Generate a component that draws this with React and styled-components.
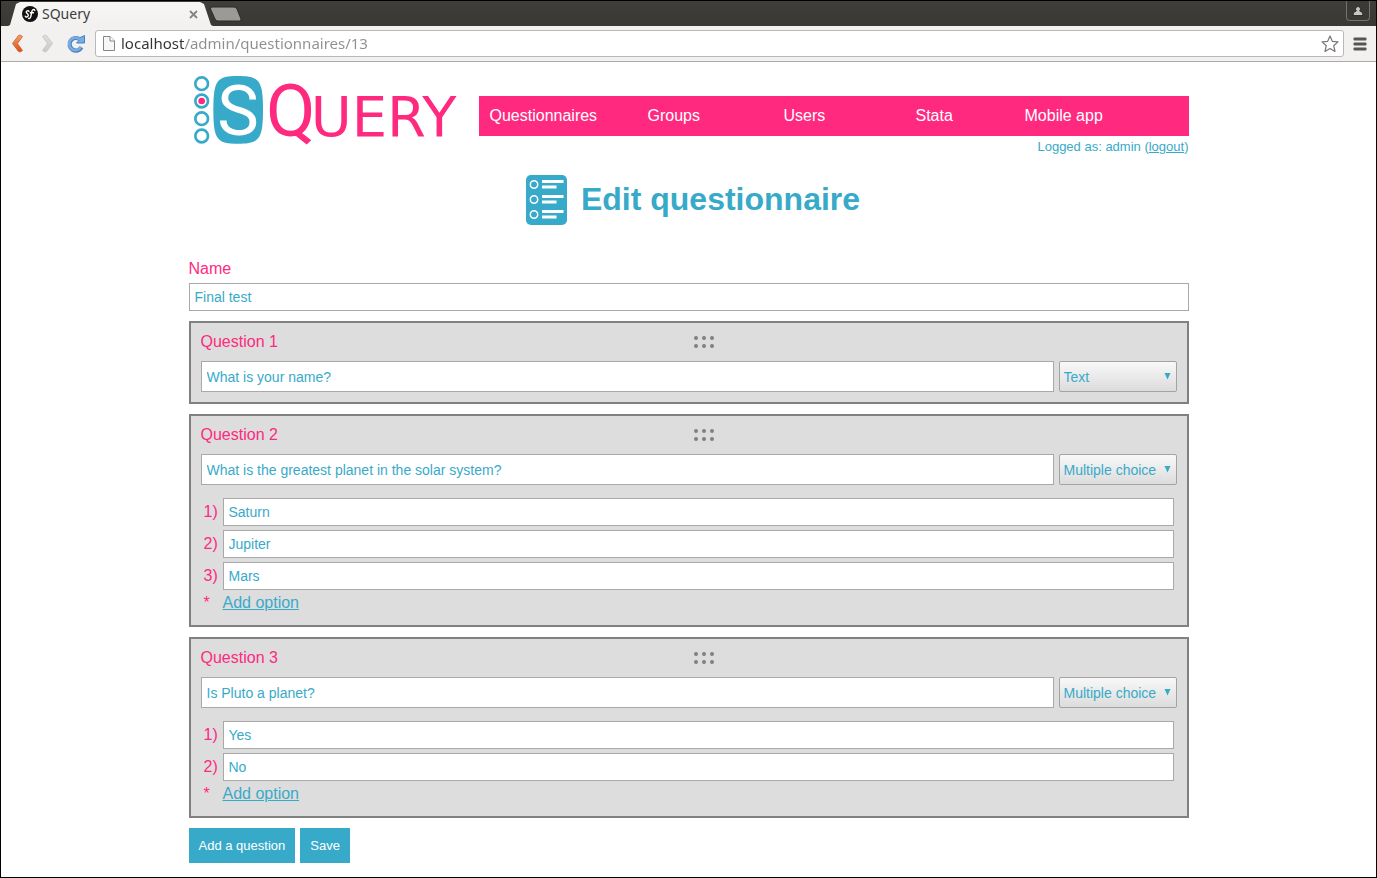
import React from 'react';
import styled, { createGlobalStyle } from 'styled-components';

const PINK = '#ff2a7f';
const BLUE = '#38aac9';
const UI_FONT = '"Noto Sans", "Open Sans", sans-serif';

const GlobalStyle = createGlobalStyle`
  *, *::before, *::after { box-sizing: border-box; }
  body {
    margin: 0;
    background: #fff;
    font: 16px/18px "Liberation Sans", Arial, sans-serif;
    color: ${PINK};
  }
  input, select, button { font-family: inherit; margin: 0; }
`;

const Window = styled.div`
  min-height: 100vh;
  border: 1px solid #000;
  background: #fff;
`;

/* ---------- browser frame ---------- */

const TabStrip = styled.div`
  display: flex;
  height: 25px;
  padding: 0 6px 0 7px;
  background: linear-gradient(#3f3e3a, #393834);
`;

const Tab = styled.div`
  display: flex;
  align-items: center;
  gap: 4px;
  width: 205px;
  margin-top: 1px;
  padding: 0 14px;
  background: linear-gradient(#f7f6f5, #f2f1f0);
  clip-path: polygon(0 100%, 2px 96%, 8px 8%, 12px 0, 192px 0, 196px 8%, 203px 96%, 100% 100%);
  font: 14px/20px ${UI_FONT};
  color: #3c3c3c;
`;

const TabTitle = styled.span`
  flex: 1;
`;

const IconButton = styled.button`
  display: flex;
  align-items: center;
  justify-content: center;
  flex: none;
  width: ${(p) => p.$width}px;
  height: ${(p) => p.$height || 24}px;
  padding: 0;
  border: 0;
  background: none;
`;

const NewTab = styled(IconButton)`
  margin: 5px auto 0 -4px;
`;

const Profile = styled(IconButton)`
  border: 1px solid #75736d;
  border-top: 0;
  border-radius: 0 0 4px 4px;
  background: #3a3935;
`;

const Toolbar = styled.div`
  display: flex;
  align-items: center;
  height: 36px;
  padding: 0 5px 0 6px;
  border-bottom: 1px solid #acabaa;
  background: #f2f1f0;
`;

const NavButtons = styled.div`
  display: flex;
  gap: 7px;
  margin-right: 8px;
`;

const AddressBar = styled.div`
  display: flex;
  align-items: center;
  flex: 1;
  height: 27px;
  margin-right: 5px;
  padding: 0 4px 0 6px;
  border: 1px solid #bab9b8;
  border-radius: 3px;
  background: #fff;
`;

const AddressInput = styled.input`
  flex: 1;
  min-width: 0;
  height: 24px;
  padding: 0 0 2px 5px;
  border: 0;
  outline: 0;
  font-family: ${UI_FONT};
  font-size: 15px;
  color: transparent;
  background: linear-gradient(90deg, #333 68px, #8f8f8f 68px);
  background-clip: text;
  -webkit-background-clip: text;
`;

/* ---------- page ---------- */

const Page = styled.div`
  max-width: 1000px;
  margin: 0 auto;
  padding: 8px 0 14px;
`;

const Header = styled.header`
  display: flex;
  gap: 10px;
`;

const HeaderSide = styled.div`
  flex: 1;
  padding-top: 26px;
`;

const Menu = styled.nav`
  display: grid;
  grid-template-columns: 158fr 136fr 132fr 109fr 175fr;
  background: ${PINK};
`;

const MenuLink = styled.a`
  padding: 0 11px;
  line-height: 40px;
  color: #fff;
  text-decoration: none;
`;

const Login = styled.p`
  margin: 2px 0 0;
  font-size: 13px;
  text-align: right;
  color: ${BLUE};
`;

const TextLink = styled.a`
  color: ${BLUE};
  text-decoration: underline;
`;

const Title = styled.h1`
  display: flex;
  align-items: center;
  justify-content: center;
  gap: 8px;
  margin: 14px 0 30px;
  font-size: 32px;
  line-height: 40px;
  color: ${BLUE};
`;

const TitleText = styled.span`
  padding-bottom: 2px;
`;

const Form = styled.form`
  display: flex;
  flex-direction: column;
  gap: 10px;
`;

const Field = styled.div`
  display: flex;
  flex-direction: column;
  gap: 5px;
`;

const TextInput = styled.input`
  flex: 1 0 auto;
  min-width: 0;
  height: ${(p) => (p.$tall ? 31 : 28)}px;
  padding: 0 5px;
  border: 1px solid #a9a9a9;
  background: #fff;
  font-size: 14px;
  color: ${BLUE};
`;

const Panel = styled.section`
  padding: 10px;
  border: 2px solid #808080;
  background: #ddd;
`;

const PanelHead = styled.div`
  display: grid;
  grid-template-columns: 493fr auto 462fr;
  align-items: center;
  margin-bottom: 10px;
`;

const QuestionRow = styled.div`
  display: flex;
  gap: 5px;
`;

const SelectBox = styled.div`
  position: relative;
  flex: none;
  width: 118px;
`;

const Select = styled.select`
  appearance: none;
  display: block;
  width: 100%;
  height: 31px;
  padding: 0 4px;
  border: 1px solid #a3a3a3;
  border-radius: 2px;
  background: linear-gradient(#f8f8f8, #dcdcdc);
  font-size: 14px;
  color: ${BLUE};
`;

const SelectArrow = styled.svg`
  position: absolute;
  top: 12px;
  right: 6px;
  pointer-events: none;
`;

const Options = styled.div`
  display: flex;
  flex-direction: column;
  gap: 4px;
  padding: 13px 3px 3px;
`;

const OptionRow = styled.div`
  display: flex;
  align-items: center;
`;

const OptionMark = styled.label`
  width: 19px;
`;

const Actions = styled.div`
  display: flex;
  gap: 5px;
`;

const ActionButton = styled.button`
  height: 35px;
  padding: 0 10px;
  border: 0;
  background: ${BLUE};
  color: #fff;
  font-size: 13px;
`;

/* ---------- drawings ---------- */

const Logo = () => (
  <svg width="280" height="80" viewBox="12 12 840 240" overflow="visible" role="img" aria-label="SQuery">
    {[53, 105, 158, 210].map((y) => (
      <circle key={y} cx="50" cy={y} r="19" fill="none" stroke={BLUE} strokeWidth="8" />
    ))}
    <circle cx="50" cy="105" r="10" fill={PINK} />
    <path
      d="M159 30C222 30 234 42 234 131S222 233 159 233 85 221 85 131 97 30 159 30Z"
      fill={BLUE}
    />
    <text x="159" y="208" textAnchor="middle" fontFamily="Roboto, sans-serif" fontSize="210" fill="#fff">
      S
    </text>
    <text x="243" y="209" fontFamily="Roboto, sans-serif" fontSize="216" fill={PINK}>
      Q
    </text>
    <text x="377" y="210" fontFamily="DejaVu Sans, sans-serif" fontSize="168" fill={PINK}>
      UERY
    </text>
  </svg>
);

const ListIcon = () => (
  <svg width="56" height="60" viewBox="0 0 56 60" aria-hidden="true">
    <rect x="9" y="5" width="41" height="50" rx="5" fill={BLUE} />
    {[14, 29, 44].map((y) => (
      <g key={y}>
        <circle cx="17" cy={y + 0.5} r="3.7" fill="none" stroke="#fff" strokeWidth="1.5" />
        <path d={`M25 ${y - 2.5}h21.5M25 ${y + 3}h14.5`} stroke="#fff" strokeWidth="2.8" />
      </g>
    ))}
  </svg>
);

const DragHandle = () => (
  <svg width="22" height="12" viewBox="0 0 22 12" aria-hidden="true">
    {[3, 11, 19].map((x) =>
      [2, 10].map((y) => <circle key={`${x}-${y}`} cx={x} cy={y} r="2" fill="#808080" />)
    )}
  </svg>
);

const Favicon = () => (
  <svg width="16" height="16" viewBox="0 0 16 16" aria-hidden="true">
    <circle cx="8" cy="8" r="8" fill="#111" />
    <path
      d="M7 5.3C6.3 4.300 4 4.700 4.200 6.200 4.400 7.500 6.600 7.600 6.300 9.500 6 11.200 3.800 11.400 3.300 10.200M12.800 4.400C11.800 2.600 10.200 3.700 9.800 5.700L8.800 10.500C8.500 12.200 7.300 13 6.600 12.200M8.300 6.800H11.500"
      fill="none"
      stroke="#fff"
      strokeWidth="1.400"
      strokeLinecap="round"
    />
  </svg>
);

const Chevron = ({ flip, from, to, edge }) => {
  const id = flip ? 'chevron-next' : 'chevron-prev';
  return (
    <svg width="14" height="20" viewBox="0 0 14 20" aria-hidden="true">
      <defs>
        <linearGradient id={id} x1="0" y1="0" x2="0" y2="1">
          <stop offset="0" stopColor={from} />
          <stop offset="1" stopColor={to} />
        </linearGradient>
      </defs>
      <path
        transform={flip ? 'matrix(-1 0 0 1 14 0)' : undefined}
        d="M9 1 11.500 2.500 6.500 9.500 11.500 16.500 9 18 7.500 17.500 1.500 9.500 7.500 1.500Z"
        fill={`url(#${id})`}
        stroke={edge}
        strokeWidth="0.800"
        strokeLinejoin="round"
      />
    </svg>
  );
};

const ReloadIcon = () => (
  <svg width="20" height="20" viewBox="0 0 20 20" aria-hidden="true">
    <path d="M15.500 13.200A6.300 6.300 0 1 1 14 5.500" fill="none" stroke="#4a80bd" strokeWidth="4.200" />
    <path d="M18.500 1.500V9H10.500L13 6.500 12 4.500Z" fill="#79ace2" stroke="#4a80bd" strokeLinejoin="round" />
    <path d="M15 12.900A6.300 6.300 0 1 1 14 5.500" fill="none" stroke="#79ace2" strokeWidth="2.600" />
  </svg>
);

const PageIcon = () => (
  <svg width="14" height="17" viewBox="0 0 14 17" aria-hidden="true">
    <path d="M1.500 1.500H8L12.500 6V15.500H1.500Z" fill="#f7f7f7" stroke="#858585" />
    <path d="M8 1.500V6H12.500" fill="#fff" stroke="#858585" />
  </svg>
);

const StarIcon = () => (
  <svg width="18" height="18" viewBox="0 0 18 18" aria-hidden="true">
    <path
      d="M9 1 11.300 6.300 17 6.900 12.700 10.700 14 16.500 9 13.500 4 16.500 5.300 10.700 1 6.900 6.700 6.300Z"
      fill="#fff"
      stroke="#777"
      strokeWidth="1.200"
      strokeLinejoin="round"
    />
  </svg>
);

const MenuIcon = () => (
  <svg width="14" height="14" viewBox="0 0 14 14" aria-hidden="true">
    {[1, 6, 11].map((y) => (
      <rect key={y} x="0.500" y={y - 0.500} width="13" height="3" rx="1" fill="#555" />
    ))}
  </svg>
);

const ProfileIcon = () => (
  <svg width="12" height="12" viewBox="0 0 12 12" aria-hidden="true">
    <path
      d="M6 1.500A2.600 2.600 0 0 1 7.600 6Q11 6.400 11 10.500H1Q1 6.400 4.400 6A2.600 2.600 0 0 1 6 1.500Z"
      fill="#c9c7c1"
      stroke="#1e1d1b"
      strokeWidth="0.800"
    />
  </svg>
);

/* ---------- data ---------- */

const MENU = ['Questionnaires', 'Groups', 'Users', 'Stata', 'Mobile app'];

const QUESTIONS = [
  { text: 'What is your name?', type: 'Text', options: [] },
  {
    text: 'What is the greatest planet in the solar system?',
    type: 'Multiple choice',
    options: ['Saturn', 'Jupiter', 'Mars'],
  },
  { text: 'Is Pluto a planet?', type: 'Multiple choice', options: ['Yes', 'No'] },
];

function BrowserFrame() {
  return (
    <>
      <TabStrip>
        <Tab>
          <Favicon />
          <TabTitle>SQuery</TabTitle>
          <IconButton $width={12} aria-label="Close tab">
            <svg width="9" height="9" viewBox="0 0 9 9" aria-hidden="true">
              <path d="M1 1 8 8M8 1 1 8" stroke="#858483" strokeWidth="1.800" />
            </svg>
          </IconButton>
        </Tab>
        <NewTab $width={33} $height={16} aria-label="New tab">
          <svg width="33" height="16" viewBox="0 0 33 16" aria-hidden="true">
            <path
              d="M3 1H25Q27 1 28 3L32 13Q32.500 15 30.500 15H9Q7 15 6 13L1.500 3Q1 1 3 1Z"
              fill="#9b9a97"
              stroke="#2b2a27"
            />
          </svg>
        </NewTab>
        <Profile $width={24} $height={20} aria-label="Profile">
          <ProfileIcon />
        </Profile>
      </TabStrip>
      <Toolbar>
        <NavButtons>
          <IconButton $width={22} aria-label="Back">
            <Chevron from="#f5a56b" to="#dc4a12" edge="#cc5a2a" />
          </IconButton>
          <IconButton $width={22} aria-label="Forward">
            <Chevron flip from="#dededd" to="#cbcac9" edge="#c2c1c0" />
          </IconButton>
          <IconButton $width={22} aria-label="Reload">
            <ReloadIcon />
          </IconButton>
        </NavButtons>
        <AddressBar>
          <PageIcon />
          <AddressInput aria-label="Address" defaultValue="localhost/admin/questionnaires/13" />
          <IconButton $width={18} aria-label="Bookmark">
            <StarIcon />
          </IconButton>
        </AddressBar>
        <IconButton $width={22} aria-label="Menu">
          <MenuIcon />
        </IconButton>
      </Toolbar>
    </>
  );
}

function Question({ number, text, type, options }) {
  const id = `question-${number}`;
  return (
    <Panel>
      <PanelHead>
        <label htmlFor={id}>Question {number}</label>
        <DragHandle />
      </PanelHead>
      <QuestionRow>
        <TextInput $tall id={id} defaultValue={text} />
        <SelectBox>
          <Select aria-label={`Question ${number} type`} defaultValue={type}>
            <option>Text</option>
            <option>Multiple choice</option>
          </Select>
          <SelectArrow width="7" height="7" viewBox="0 0 7 7" aria-hidden="true">
            <path d="M0.500 0H6.500L3.500 6.500Z" fill={BLUE} />
          </SelectArrow>
        </SelectBox>
      </QuestionRow>
      {options.length > 0 && (
        <Options>
          {options.map((option, i) => (
            <OptionRow key={option}>
              <OptionMark htmlFor={`${id}-${i}`}>{i + 1})</OptionMark>
              <TextInput id={`${id}-${i}`} defaultValue={option} />
            </OptionRow>
          ))}
          <OptionRow>
            <OptionMark as="span">*</OptionMark>
            <TextLink href="#add-option">Add option</TextLink>
          </OptionRow>
        </Options>
      )}
    </Panel>
  );
}

export default function App() {
  return (
    <Window>
      <GlobalStyle />
      <BrowserFrame />
      <Page>
        <Header>
          <Logo />
          <HeaderSide>
            <Menu>
              {MENU.map((item) => (
                <MenuLink key={item} href="#menu">
                  {item}
                </MenuLink>
              ))}
            </Menu>
            <Login>
              Logged as: admin (<TextLink href="#logout">logout</TextLink>)
            </Login>
          </HeaderSide>
        </Header>
        <Title>
          <ListIcon />
          <TitleText>Edit questionnaire</TitleText>
        </Title>
        <Form>
          <Field>
            <label htmlFor="name">Name</label>
            <TextInput id="name" defaultValue="Final test" />
          </Field>
          {QUESTIONS.map((question, i) => (
            <Question key={question.text} number={i + 1} {...question} />
          ))}
          <Actions>
            <ActionButton type="button">Add a question</ActionButton>
            <ActionButton type="button">Save</ActionButton>
          </Actions>
        </Form>
      </Page>
    </Window>
  );
}
